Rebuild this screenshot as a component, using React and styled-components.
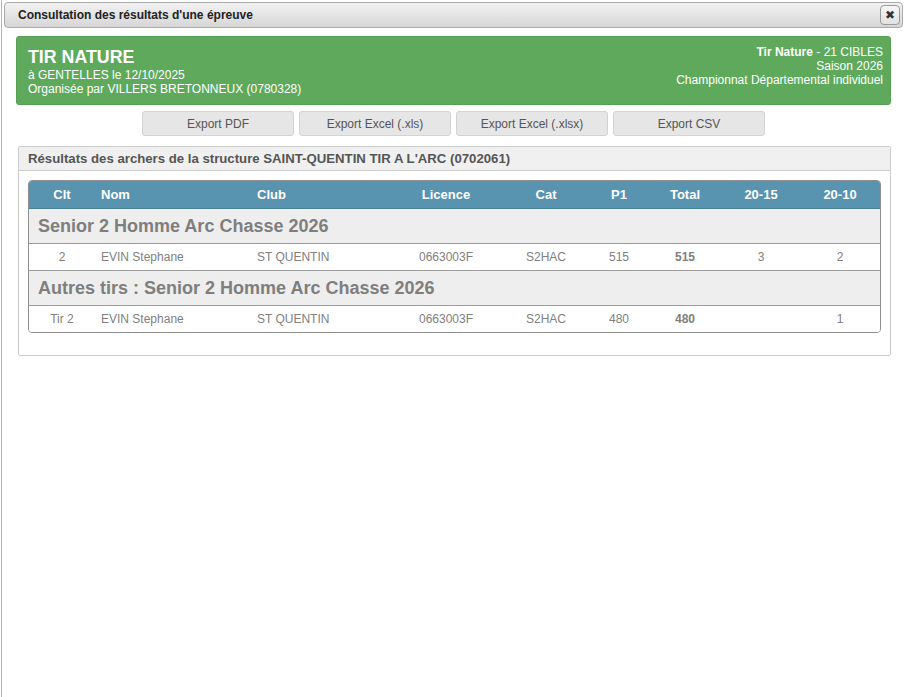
import React from "react";
import styled, { createGlobalStyle } from "styled-components";

const GlobalStyle = createGlobalStyle`
  html, body {
    margin: 0;
    padding: 0;
    background: #ffffff;
  }
  body {
    font-family: "Liberation Sans", Arial, sans-serif;
  }
`;

const Dialog = styled.div`
  width: 903px;
  height: 697px;
  margin-left: 1px;
  border-left: 1px solid #b4b4b4;
  box-sizing: border-box;
  padding: 2px 1px 0 2px;
  background: #fff;
`;

const TitleBar = styled.div`
  height: 26px;
  box-sizing: border-box;
  border: 1px solid #aaaaaa;
  border-radius: 4px;
  background: linear-gradient(#f2f2f2, #d6d6d6);
  display: flex;
  align-items: center;
  justify-content: space-between;
  padding: 0 2px 0 13px;
  color: #222;
  font-weight: bold;
  font-size: 12px;
`;

const CloseButton = styled.button`
  width: 20px;
  height: 20px;
  border: 1px solid #9a9a9a;
  border-radius: 4px;
  background: linear-gradient(#f6f6f6, #e2e2e2);
  display: flex;
  align-items: center;
  justify-content: center;
  padding: 0;
  color: #333;
  font-size: 12px;
  line-height: 1;
`;

const Content = styled.div`
  padding: 8px 12px 0 12px;
`;

const Banner = styled.div`
  background: #5ea95c;
  border: 1px solid #56a054;
  border-radius: 3px;
  color: #fff;
  display: flex;
  justify-content: space-between;
  padding: 10px 7px 8px 11px;
  font-size: 12px;
  line-height: 14px;
`;

const BannerTitle = styled.div`
  font-size: 17.8px;
  font-weight: bold;
  line-height: 20px;
  margin-bottom: 1px;
`;

const BannerRight = styled.div`
  text-align: right;
  margin-top: -2px;
`;

const Strong = styled.span`
  font-weight: bold;
`;

const Toolbar = styled.div`
  display: flex;
  justify-content: center;
  gap: 5px;
  margin-top: 6px;
`;

const ExportButton = styled.button`
  width: 152px;
  height: 25px;
  border: 1px solid #d3d3d3;
  border-radius: 3px;
  background: #e6e6e6;
  color: #555;
  font-family: "Liberation Sans", Arial, sans-serif;
  font-size: 12px;
  padding: 0;
`;

const Panel = styled.div`
  margin: 10px 0 0 2px;
  border: 1px solid #cccccc;
  border-radius: 2px;
`;

const PanelHeader = styled.div`
  background: #f0f0f1;
  border-bottom: 1px solid #cccccc;
  height: 23px;
  display: flex;
  align-items: center;
  padding-left: 9px;
  font-weight: bold;
  font-size: 13.2px;
  color: #555;
`;

const PanelBody = styled.div`
  padding: 9px 9px 22px 9px;
`;

const TableWrap = styled.div`
  border: 1px solid #8f8f8f;
  border-radius: 4px;
  overflow: hidden;
`;

const Table = styled.table`
  width: 100%;
  border-collapse: collapse;
  table-layout: fixed;
  font-size: 12px;
`;

const HeadCell = styled.th`
  background: #5893b0;
  color: #fff;
  font-weight: bold;
  font-size: 13px;
  height: 27px;
  padding: 0 6px;
  text-align: ${(p) => p.$align || "center"};
  border-bottom: 1px solid #4a7f98;
`;

const GroupCell = styled.td`
  background: #eeeeee;
  color: #7e7e7e;
  font-weight: bold;
  font-size: 18px;
  height: 34px;
  padding: 0 9px;
  border-bottom: 1px solid #9a9a9a;
`;

const Cell = styled.td`
  background: #fff;
  color: #808080;
  height: 26px;
  padding: 0 6px;
  text-align: ${(p) => p.$align || "center"};
  font-weight: ${(p) => (p.$bold ? "bold" : "normal")};
  border-bottom: ${(p) => (p.$last ? "none" : "1px solid #9a9a9a")};
`;

const columns = [
  { label: "Clt", width: 66 },
  { label: "Nom", width: 156, align: "left" },
  { label: "Club", width: 140, align: "left" },
  { label: "Licence", width: 110 },
  { label: "Cat", width: 90 },
  { label: "P1", width: 56 },
  { label: "Total", width: 76 },
  { label: "20-15", width: 76 },
  { label: "20-10", width: 82 },
];

const groups = [
  {
    title: "Senior 2 Homme Arc Chasse 2026",
    row: ["2", "EVIN Stephane", "ST QUENTIN", "0663003F", "S2HAC", "515", "515", "3", "2"],
  },
  {
    title: "Autres tirs : Senior 2 Homme Arc Chasse 2026",
    row: ["Tir 2", "EVIN Stephane", "ST QUENTIN", "0663003F", "S2HAC", "480", "480", "", "1"],
  },
];

const App = () => (
  <>
    <GlobalStyle />
    <Dialog>
      <TitleBar>
        <span>Consultation des résultats d'une épreuve</span>
        <CloseButton aria-label="Fermer">✖</CloseButton>
      </TitleBar>
      <Content>
        <Banner>
          <div>
            <BannerTitle>TIR NATURE</BannerTitle>
            <div>à GENTELLES le 12/10/2025</div>
            <div>Organisée par VILLERS BRETONNEUX (0780328)</div>
          </div>
          <BannerRight>
            <div><Strong>Tir Nature</Strong> - 21 CIBLES</div>
            <div>Saison 2026</div>
            <div>Championnat Départemental individuel</div>
          </BannerRight>
        </Banner>
        <Toolbar>
          <ExportButton>Export PDF</ExportButton>
          <ExportButton>Export Excel (.xls)</ExportButton>
          <ExportButton>Export Excel (.xlsx)</ExportButton>
          <ExportButton>Export CSV</ExportButton>
        </Toolbar>
        <Panel>
          <PanelHeader>
            Résultats des archers de la structure SAINT-QUENTIN TIR A L'ARC (0702061)
          </PanelHeader>
          <PanelBody>
            <TableWrap>
              <Table>
                <colgroup>
                  {columns.map((c) => (
                    <col key={c.label} style={{ width: c.width }} />
                  ))}
                </colgroup>
                <thead>
                  <tr>
                    {columns.map((c) => (
                      <HeadCell key={c.label} $align={c.align}>
                        {c.label}
                      </HeadCell>
                    ))}
                  </tr>
                </thead>
                <tbody>
                  {groups.map((g, gi) => (
                    <React.Fragment key={g.title}>
                      <tr>
                        <GroupCell colSpan={columns.length}>{g.title}</GroupCell>
                      </tr>
                      <tr>
                        {g.row.map((v, i) => (
                          <Cell
                            key={i}
                            $align={columns[i].align}
                            $bold={i === 6}
                            $last={gi === groups.length - 1}
                          >
                            {v}
                          </Cell>
                        ))}
                      </tr>
                    </React.Fragment>
                  ))}
                </tbody>
              </Table>
            </TableWrap>
          </PanelBody>
        </Panel>
      </Content>
    </Dialog>
  </>
);

export default App;
